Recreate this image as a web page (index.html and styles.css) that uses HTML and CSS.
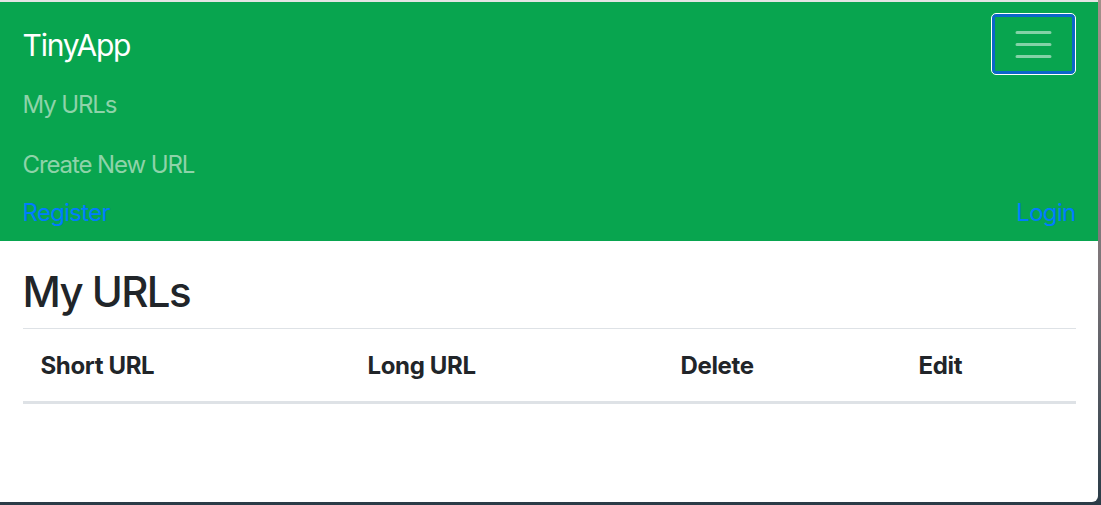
FILE: index.html
```html
<!DOCTYPE html>
<html lang="en">
<head>
<meta charset="utf-8">
<title>TinyApp</title>
<link rel="stylesheet" href="styles.css">
</head>
<body>
<div class="window">
  <nav class="navbar">
    <div class="navbar-top">
      <a class="brand" href="#">TinyApp</a>
      <button class="toggler" type="button" aria-label="Toggle navigation">
        <svg class="toggler-icon" viewBox="0 0 30 30" width="45" height="45">
          <path d="M4 7h22M4 15h22M4 23h22" stroke="rgba(255,255,255,0.5)" stroke-width="2" stroke-linecap="round" fill="none"/>
        </svg>
      </button>
    </div>
    <ul class="nav-links">
      <li><a class="nav-link" href="#">My URLs</a></li>
      <li><a class="nav-link" href="#">Create New URL</a></li>
    </ul>
    <div class="auth">
      <a class="auth-link" href="#">Register</a>
      <a class="auth-link" href="#">Login</a>
    </div>
  </nav>
  <main class="container">
    <h1 class="title">My URLs</h1>
    <table class="url-table">
      <thead>
        <tr>
          <th class="col-short">Short URL</th>
          <th class="col-long">Long URL</th>
          <th class="col-delete">Delete</th>
          <th class="col-edit">Edit</th>
        </tr>
      </thead>
      <tbody></tbody>
    </table>
  </main>
</div>
</body>
</html>
```

FILE: styles.css
```css
* { box-sizing: border-box; }

html, body {
  margin: 0;
  padding: 0;
  height: 100%;
}

body {
  background: linear-gradient(to bottom, #a3908a 0%, #7a7478 55%, #2a3b47 100%);
  font-family: Inter, "Noto Sans", "Liberation Sans", sans-serif;
  color: #212529;
  overflow: hidden;
}

.window {
  width: 1098px;
  height: 502px;
  background: #fff;
  border-top: 2px solid #e4e4e4;
  border-bottom-right-radius: 6px;
  overflow: hidden;
}

.navbar {
  background: #08a54f;
  padding: 11px 22.5px 10px 22.5px;
}

.navbar-top {
  display: flex;
  align-items: center;
  justify-content: space-between;
}

.brand {
  color: #fff;
  text-decoration: none;
  font-size: 30px;
  line-height: 45px;
  letter-spacing: -1.2px;
  padding: 9px 0 6px 0;
}

.toggler {
  width: 85px;
  height: 62px;
  padding: 0;
  margin: 0;
  background: transparent;
  border: 1px solid #ffffff;
  border-radius: 5px;
  box-shadow: inset 0 0 0 3px #0b66c9;
  display: flex;
  align-items: center;
  justify-content: center;
}

.toggler-icon { display: block; }

.nav-links {
  list-style: none;
  margin: 0;
  padding: 0;
}

.nav-link {
  display: block;
  padding: 12px 0;
  font-size: 24px;
  line-height: 36px;
  letter-spacing: -1.1px;
  color: #8ed3a9;
  text-decoration: none;
}

.auth {
  display: flex;
  justify-content: space-between;
}

.auth-link {
  font-size: 24px;
  line-height: 36px;
  letter-spacing: -0.7px;
  color: #007bff;
  text-decoration: none;
}

.container {
  padding: 0 22.5px;
}

.title {
  margin: 26px 0 11px 0;
  font-size: 42px;
  line-height: 50px;
  letter-spacing: -1.6px;
  font-weight: 500;
}

.url-table {
  width: 100%;
  border-collapse: collapse;
  table-layout: fixed;
  border-top: 1px solid #dee2e6;
}

.url-table th {
  text-align: left;
  padding: 19px 18px 17px 18px;
  font-size: 24px;
  line-height: 36px;
  letter-spacing: -0.35px;
  font-weight: 700;
  border-bottom: 3px solid #dee2e6;
}

.col-short { width: 327px; }
.col-long { width: 313px; }
.col-delete { width: 238px; }
```
